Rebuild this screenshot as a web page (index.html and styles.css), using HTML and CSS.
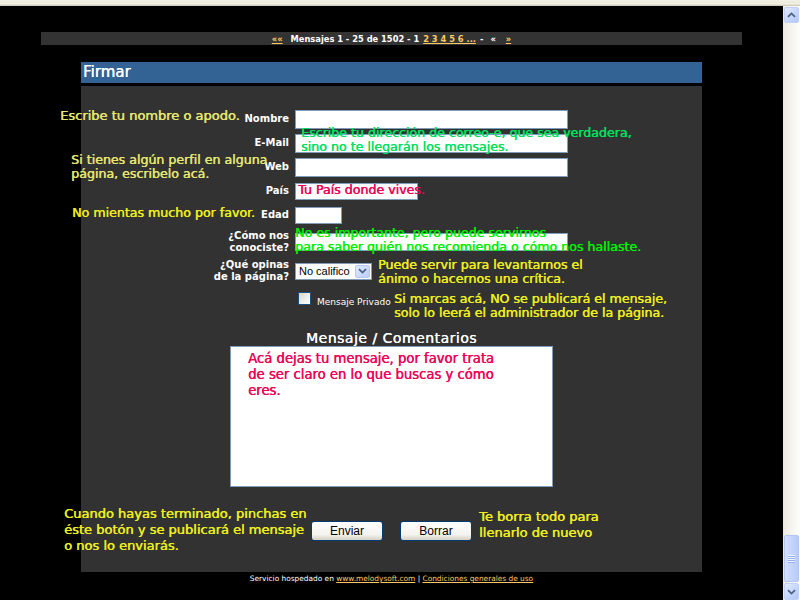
FILE: index.html
```html
<!DOCTYPE html>
<html lang="es">
<head>
<meta charset="utf-8">
<title>Firmar</title>
<link rel="stylesheet" href="styles.css">
</head>
<body>
<div class="chrome"></div>
<div class="window">
  <div class="page">
    <div class="pager">
      <a class="pg-link">««</a><span class="pg-text">Mensajes 1 - 25 de 1502 - 1</span><a class="pg-link pg-pages">2 3 4 5 6 ...</a><span class="pg-dash">-</span><span class="pg-prev">«</span><a class="pg-link pg-next">»</a>
    </div>

    <div class="sign">
      <div class="sign-title">Firmar</div>
      <div class="sign-body">
        <div class="row h24"><label>Nombre</label><input class="field w-long" type="text"></div>
        <div class="row h24"><label>E-Mail</label><input class="field w-long" type="text"></div>
        <div class="row h24"><label>Web</label><input class="field w-long" type="text"></div>
        <div class="row h24"><label>País</label><input class="field w-pais" type="text"></div>
        <div class="row h24"><label>Edad</label><input class="field w-edad" type="text"></div>
        <div class="row h30"><label>¿Cómo nos<br>conociste?</label><input class="field w-long h18" type="text"></div>
        <div class="row h28"><label>¿Qué opinas<br>de la página?</label>
          <div class="select"><span class="select-text">No califico</span><span class="select-btn"><svg width="9" height="6" viewBox="0 0 9 6"><path d="M1 1.2 L4.5 4.6 L8 1.2" fill="none" stroke="#4d6185" stroke-width="1.8"/></svg></span></div>
        </div>
        <div class="row h27"><span></span>
          <div class="check-wrap"><span class="checkbox"></span><span class="check-label">Mensaje Privado</span></div>
        </div>
        <div class="msg-title">Mensaje / Comentarios</div>
        <textarea class="msg"></textarea>
        <div class="buttons">
          <button class="btn" type="button">Enviar</button>
          <button class="btn" type="button">Borrar</button>
        </div>
      </div>
      <div class="footer">Servicio hospedado en <a class="ft-link">www.melodysoft.com</a> | <a class="ft-link">Condiciones generales de uso</a></div>
    </div>

    <div class="note pale n1">Escribe tu nombre o apodo.</div>
    <div class="note green n2">Escribe tu dirección de correo-e, que sea verdadera,<br>sino no te llegarán los mensajes.</div>
    <div class="note pale n3">Si tienes algún perfil en alguna<br>página, escribelo acá.</div>
    <div class="note pink n4">Tu País donde vives.</div>
    <div class="note yellow n5">No mientas mucho por favor.</div>
    <div class="note lime n6">No es importante, pero puede servirnos<br>para saber quién nos recomienda o cómo nos hallaste.</div>
    <div class="note yellow n7">Puede servir para levantarnos el<br>ánimo o hacernos una crítica.</div>
    <div class="note yellow n8">Si marcas acá, NO se publicará el mensaje,<br>solo lo leerá el administrador de la página.</div>
    <div class="note pink n9">Acá dejas tu mensaje, por favor trata<br>de ser claro en lo que buscas y cómo<br>eres.</div>
    <div class="note yellow n10">Cuando hayas terminado, pinchas en<br>éste botón y se publicará el mensaje<br>o nos lo enviarás.</div>
    <div class="note yellow n11">Te borra todo para<br>llenarlo de nuevo</div>
  </div>

  <div class="scrollbar">
    <div class="sb-btn sb-up"><svg width="9" height="6" viewBox="0 0 9 6"><path d="M1 4.8 L4.5 1.4 L8 4.8" fill="none" stroke="#4d6185" stroke-width="1.8"/></svg></div>
    <div class="sb-space"></div>
    <div class="sb-thumb"><span class="grip"></span></div>
    <div class="sb-btn sb-down"><svg width="9" height="6" viewBox="0 0 9 6"><path d="M1 1.2 L4.5 4.6 L8 1.2" fill="none" stroke="#4d6185" stroke-width="1.8"/></svg></div>
  </div>
</div>
</body>
</html>
```
FILE: styles.css
```css
* { box-sizing: border-box; }
html, body { margin: 0; padding: 0; }
body {
  width: 800px;
  height: 600px;
  overflow: hidden;
  background: #000;
  font-family: "DejaVu Sans", Verdana, sans-serif;
}

.chrome {
  height: 6px;
  background: linear-gradient(#f3f1e8, #ece9d8 3px, #f8f6ee 4px, #d2cebd 5px);
}

.window { display: flex; height: 594px; }

.page {
  position: relative;
  width: 783px;
  height: 594px;
  overflow: hidden;
  background: #000;
}

/* pager */
.pager {
  width: 701px;
  height: 13px;
  margin: 26px auto 0;
  background: #333;
  display: flex;
  justify-content: center;
  align-items: center;
  font-size: 8.3px;
  font-weight: bold;
  color: #fff;
  white-space: pre;
}
.pg-link { color: #ffc862; text-decoration: underline; }
.pg-text { margin-left: 8px; }
.pg-pages { margin-left: 4px; }
.pg-dash { margin-left: 4px; }
.pg-prev { margin-left: 7px; }
.pg-next { margin-left: 10px; }

/* sign block */
.sign { width: 621px; margin: 17px auto 0; }
.sign-title {
  height: 21px;
  background: #336294;
  color: #fff;
  font-size: 15px;
  line-height: 21px;
  padding-left: 2px;
  text-shadow: 0.3px 0 0 #fff;
}
.sign-body {
  margin-top: 3px;
  height: 486px;
  background: #323232;
  padding-top: 21px;
}

.row {
  display: grid;
  grid-template-columns: 208px auto;
  column-gap: 6px;
  align-items: center;
  justify-items: start;
}
.row label {
  justify-self: end;
  text-align: right;
  color: #fff;
  font-weight: bold;
  font-size: 10px;
  line-height: 12px;
}
.h24 { height: 24px; }
.h27 { height: 27px; }
.h28 { height: 28px; }
.h30 { height: 30px; }

.field {
  display: block;
  height: 19px;
  margin: 0;
  padding: 0 2px;
  border: 1px solid #7f9db9;
  background: #fff;
  font-size: 11px;
}
.w-long { width: 273px; }
.w-pais { width: 123px; height: 17px; }
.w-edad { width: 47px; height: 17px; }
.h18 { height: 18px; }

.select {
  width: 77px;
  height: 17px;
  border: 1px solid #7f9db9;
  background: #fff;
  display: flex;
  align-items: center;
  justify-content: space-between;
  padding: 0 1px 0 3px;
}
.select-text {
  font-family: "Liberation Sans", Arial, sans-serif;
  font-size: 11px;
  color: #000;
  line-height: 15px;
  white-space: nowrap;
}
.select-btn {
  width: 15px;
  height: 13px;
  border: 1px solid #b5c8f3;
  border-radius: 2px;
  background: linear-gradient(135deg, #e1eafe, #b9cefb);
  display: flex;
  align-items: center;
  justify-content: center;
}

.check-wrap { display: flex; align-items: center; margin-left: 3px; }
.checkbox {
  width: 13px;
  height: 13px;
  border: 1px solid #1c5180;
  background: linear-gradient(135deg, #d6d6d0, #eeeeea 55%, #fff);
}
.check-label {
  margin-left: 6px;
  padding-top: 6px;
  font-size: 9px;
  color: #fff;
}

.msg-title {
  margin-top: 18px;
  height: 16px;
  line-height: 16px;
  text-align: center;
  color: #fff;
  font-size: 14px;
  letter-spacing: 0.5px;
  text-shadow: 0.3px 0 0 #fff;
}
.msg {
  display: block;
  width: 323px;
  height: 141px;
  margin: 0 auto;
  border: 1px solid #7f9db9;
  background: #fff;
  resize: none;
  padding: 2px;
}

.buttons {
  margin-top: 34px;
  display: flex;
  justify-content: center;
  gap: 17px;
}
.btn {
  width: 72px;
  height: 20px;
  margin: 0;
  padding: 0;
  border: 1px solid #003c74;
  border-radius: 3px;
  background: linear-gradient(#ffffff, #f4f3ee 70%, #d6d0c5);
  color: #000;
  font-family: "Liberation Sans", Arial, sans-serif;
  font-size: 12px;
  line-height: 18px;
}

.footer {
  height: 14px;
  line-height: 14px;
  text-align: center;
  font-size: 7.4px;
  color: #fff;
}
.ft-link { color: #ffc862; text-decoration: underline; }

/* annotations laid over the form */
.note {
  position: absolute;
  white-space: nowrap;
  font-size: 12.6px;
  line-height: 14px;
  text-shadow: 0.45px 0 0 currentColor;
}
.pale { color: #e6e670; }
.yellow { color: #eeee1e; }
.green { color: #00e060; }
.lime { color: #00ee00; }
.pink { color: #ee0055; }

.n1 { left: 60px; top: 102px; font-size: 13px; line-height: 15px; }
.n2 { left: 301px; top: 120px; }
.n3 { left: 71px; top: 147px; }
.n4 { left: 298px; top: 176px; line-height: 15px; }
.n5 { left: 72px; top: 199px; line-height: 15px; }
.n6 { left: 295px; top: 220px; }
.n7 { left: 378px; top: 252px; }
.n8 { left: 394px; top: 286px; }
.n9 { left: 248px; top: 345px; font-size: 13.2px; line-height: 16px; }
.n10 { left: 64px; top: 500px; font-size: 13px; line-height: 16px; }
.n11 { left: 479px; top: 503px; font-size: 13px; line-height: 16px; }

/* scrollbar */
.scrollbar {
  width: 17px;
  height: 594px;
  display: flex;
  flex-direction: column;
  background: linear-gradient(to right, #edeae2, #f4f2ec 40%, #fdfdfb);
}
.sb-btn {
  margin-left: 1px;
  width: 15px;
  border: 1px solid #c0d0f7;
  border-radius: 2px;
  background: linear-gradient(135deg, #e3ebfe, #c3d4fb 60%, #b3c8f6);
  display: flex;
  align-items: center;
  justify-content: center;
}
.sb-up { margin-top: 1px; height: 16px; }
.sb-space { flex: 1; }
.sb-thumb {
  margin-left: 1px;
  width: 15px;
  height: 47px;
  border: 1px solid #b2c6f3;
  border-radius: 2px;
  background: linear-gradient(to right, #d4e0fd, #c4d5fc 50%, #b8cbf8);
  display: flex;
  align-items: center;
  justify-content: center;
}
.grip {
  width: 7px;
  height: 8px;
  background: repeating-linear-gradient(#f2f6ff 0 1px, #8eaeee 1px 2px);
}
.sb-down { margin-top: 1px; height: 17px; }
```
